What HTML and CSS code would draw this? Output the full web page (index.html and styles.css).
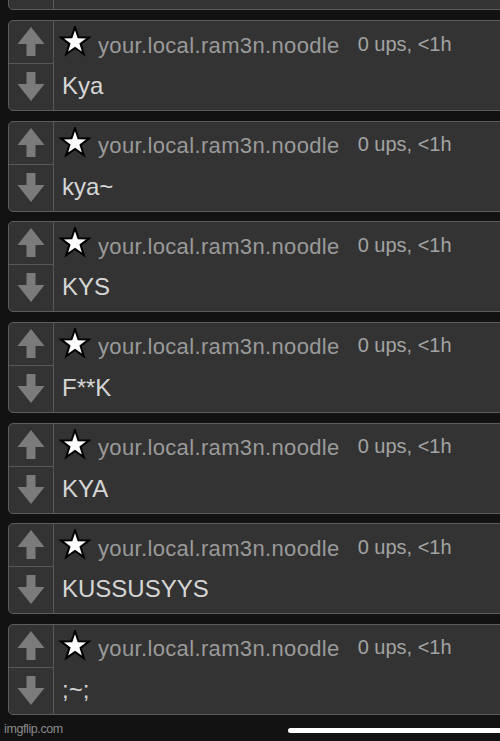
FILE: index.html
```html
<!DOCTYPE html>
<html lang="en">
<head>
  <meta charset="UTF-8">
  <meta name="viewport" content="width=device-width, initial-scale=1.0">
  <title>Comments</title>
  <link rel="stylesheet" href="styles.css">
</head>
<body>
  <!-- Comment list -->
  <div class="comment-list">
    <!-- previous comment, scrolled mostly out of view -->
    <div class="comment">
      <div class="vote">
        <div class="vote-up"><svg class="arrow" viewBox="0 0 28 30"><polygon points="14,0 27.5,17 18.5,17 18.5,29 9.5,29 9.5,17 0.5,17"/></svg></div>
        <div class="vote-down"><svg class="arrow" viewBox="0 0 28 30"><polygon points="14,29 27.5,12 18.5,12 18.5,0 9.5,0 9.5,12 0.5,12"/></svg></div>
      </div>
      <div class="comment-main"></div>
    </div>

    <div class="comment">
      <div class="vote">
        <div class="vote-up"><svg class="arrow" viewBox="0 0 28 30"><polygon points="14,0 27.5,17 18.5,17 18.5,29 9.5,29 9.5,17 0.5,17"/></svg></div>
        <div class="vote-down"><svg class="arrow" viewBox="0 0 28 30"><polygon points="14,29 27.5,12 18.5,12 18.5,0 9.5,0 9.5,12 0.5,12"/></svg></div>
      </div>
      <div class="comment-main">
        <div class="comment-head">
          <svg class="star" viewBox="0 0 30 30"><polygon points="15,1 18.233,10.55 28.315,10.674 20.231,16.7 23.229,26.326 15,20.5 6.771,26.326 9.769,16.7 1.685,10.674 11.767,10.55"/></svg>
          <span class="username">your.local.ram3n.noodle</span>
          <span class="meta">0 ups, &lt;1h</span>
        </div>
        <div class="comment-text">Kya</div>
      </div>
    </div>

    <div class="comment">
      <div class="vote">
        <div class="vote-up"><svg class="arrow" viewBox="0 0 28 30"><polygon points="14,0 27.5,17 18.5,17 18.5,29 9.5,29 9.5,17 0.5,17"/></svg></div>
        <div class="vote-down"><svg class="arrow" viewBox="0 0 28 30"><polygon points="14,29 27.5,12 18.5,12 18.5,0 9.5,0 9.5,12 0.5,12"/></svg></div>
      </div>
      <div class="comment-main">
        <div class="comment-head">
          <svg class="star" viewBox="0 0 30 30"><polygon points="15,1 18.233,10.55 28.315,10.674 20.231,16.7 23.229,26.326 15,20.5 6.771,26.326 9.769,16.7 1.685,10.674 11.767,10.55"/></svg>
          <span class="username">your.local.ram3n.noodle</span>
          <span class="meta">0 ups, &lt;1h</span>
        </div>
        <div class="comment-text">kya~</div>
      </div>
    </div>

    <div class="comment">
      <div class="vote">
        <div class="vote-up"><svg class="arrow" viewBox="0 0 28 30"><polygon points="14,0 27.5,17 18.5,17 18.5,29 9.5,29 9.5,17 0.5,17"/></svg></div>
        <div class="vote-down"><svg class="arrow" viewBox="0 0 28 30"><polygon points="14,29 27.5,12 18.5,12 18.5,0 9.5,0 9.5,12 0.5,12"/></svg></div>
      </div>
      <div class="comment-main">
        <div class="comment-head">
          <svg class="star" viewBox="0 0 30 30"><polygon points="15,1 18.233,10.55 28.315,10.674 20.231,16.7 23.229,26.326 15,20.5 6.771,26.326 9.769,16.7 1.685,10.674 11.767,10.55"/></svg>
          <span class="username">your.local.ram3n.noodle</span>
          <span class="meta">0 ups, &lt;1h</span>
        </div>
        <div class="comment-text">KYS</div>
      </div>
    </div>

    <div class="comment">
      <div class="vote">
        <div class="vote-up"><svg class="arrow" viewBox="0 0 28 30"><polygon points="14,0 27.5,17 18.5,17 18.5,29 9.5,29 9.5,17 0.5,17"/></svg></div>
        <div class="vote-down"><svg class="arrow" viewBox="0 0 28 30"><polygon points="14,29 27.5,12 18.5,12 18.5,0 9.5,0 9.5,12 0.5,12"/></svg></div>
      </div>
      <div class="comment-main">
        <div class="comment-head">
          <svg class="star" viewBox="0 0 30 30"><polygon points="15,1 18.233,10.55 28.315,10.674 20.231,16.7 23.229,26.326 15,20.5 6.771,26.326 9.769,16.7 1.685,10.674 11.767,10.55"/></svg>
          <span class="username">your.local.ram3n.noodle</span>
          <span class="meta">0 ups, &lt;1h</span>
        </div>
        <div class="comment-text">F**K</div>
      </div>
    </div>

    <div class="comment">
      <div class="vote">
        <div class="vote-up"><svg class="arrow" viewBox="0 0 28 30"><polygon points="14,0 27.5,17 18.5,17 18.5,29 9.5,29 9.5,17 0.5,17"/></svg></div>
        <div class="vote-down"><svg class="arrow" viewBox="0 0 28 30"><polygon points="14,29 27.5,12 18.5,12 18.5,0 9.5,0 9.5,12 0.5,12"/></svg></div>
      </div>
      <div class="comment-main">
        <div class="comment-head">
          <svg class="star" viewBox="0 0 30 30"><polygon points="15,1 18.233,10.55 28.315,10.674 20.231,16.7 23.229,26.326 15,20.5 6.771,26.326 9.769,16.7 1.685,10.674 11.767,10.55"/></svg>
          <span class="username">your.local.ram3n.noodle</span>
          <span class="meta">0 ups, &lt;1h</span>
        </div>
        <div class="comment-text">KYA</div>
      </div>
    </div>

    <div class="comment">
      <div class="vote">
        <div class="vote-up"><svg class="arrow" viewBox="0 0 28 30"><polygon points="14,0 27.5,17 18.5,17 18.5,29 9.5,29 9.5,17 0.5,17"/></svg></div>
        <div class="vote-down"><svg class="arrow" viewBox="0 0 28 30"><polygon points="14,29 27.5,12 18.5,12 18.5,0 9.5,0 9.5,12 0.5,12"/></svg></div>
      </div>
      <div class="comment-main">
        <div class="comment-head">
          <svg class="star" viewBox="0 0 30 30"><polygon points="15,1 18.233,10.55 28.315,10.674 20.231,16.7 23.229,26.326 15,20.5 6.771,26.326 9.769,16.7 1.685,10.674 11.767,10.55"/></svg>
          <span class="username">your.local.ram3n.noodle</span>
          <span class="meta">0 ups, &lt;1h</span>
        </div>
        <div class="comment-text">KUSSUSYYS</div>
      </div>
    </div>

    <div class="comment">
      <div class="vote">
        <div class="vote-up"><svg class="arrow" viewBox="0 0 28 30"><polygon points="14,0 27.5,17 18.5,17 18.5,29 9.5,29 9.5,17 0.5,17"/></svg></div>
        <div class="vote-down"><svg class="arrow" viewBox="0 0 28 30"><polygon points="14,29 27.5,12 18.5,12 18.5,0 9.5,0 9.5,12 0.5,12"/></svg></div>
      </div>
      <div class="comment-main">
        <div class="comment-head">
          <svg class="star" viewBox="0 0 30 30"><polygon points="15,1 18.233,10.55 28.315,10.674 20.231,16.7 23.229,26.326 15,20.5 6.771,26.326 9.769,16.7 1.685,10.674 11.767,10.55"/></svg>
          <span class="username">your.local.ram3n.noodle</span>
          <span class="meta">0 ups, &lt;1h</span>
        </div>
        <div class="comment-text">;~;</div>
      </div>
    </div>
  </div>

  <!-- Footer -->
  <div class="footer">
    <span class="watermark">imgflip.com</span>
    <div class="home-bar"></div>
  </div>
</body>
</html>
```

FILE: styles.css
```css
/* General Styles */
body {
  font-family: "Liberation Sans", Arial, sans-serif;
  margin: 0;
  padding: 0;
  background-color: #121212;
  overflow: hidden;
  height: 741px;
}

/* Comment list */
.comment-list {
  display: flex;
  flex-direction: column;
  gap: 9.67px;
  margin-top: -80.67px;
}

.comment {
  display: flex;
  height: 91px;
  box-sizing: border-box;
  margin-left: 8px;
  margin-right: -20px;
  background-color: #333333;
  border: 1px solid #5c5c5c;
  border-radius: 5px;
}

/* Vote column */
.vote {
  width: 44px;
  display: flex;
  flex-direction: column;
  border-right: 1px solid #575757;
}

.vote-up {
  height: 42px;
  border-bottom: 1px solid #575757;
  display: flex;
  justify-content: center;
  align-items: center;
}

.vote-down {
  flex: 1;
  display: flex;
  justify-content: center;
  align-items: center;
}

.arrow {
  width: 28px;
  height: 30px;
  fill: #7b7b7b;
}

/* Comment body */
.comment-main {
  flex: 1;
  display: flex;
  flex-direction: column;
}

.comment-head {
  height: 44px;
  display: flex;
  align-items: flex-start;
}

.star {
  width: 32px;
  height: 32px;
  margin-left: 5px;
  margin-top: 5px;
  fill: #ffffff;
  stroke: #000000;
  stroke-width: 1.9;
  stroke-linejoin: miter;
}

.username {
  margin-left: 7px;
  margin-top: 12.5px;
  font-size: 22px;
  line-height: 24px;
  letter-spacing: 0.35px;
  color: #9a9a9a;
}

.meta {
  margin-left: 18px;
  margin-top: 10.5px;
  font-size: 20px;
  line-height: 24px;
  color: #a3a3a3;
}

.comment-text {
  margin-top: 7px;
  padding-left: 8px;
  font-size: 24px;
  line-height: 28px;
  color: #d6d6d6;
}

/* Footer */
.footer {
  display: flex;
  justify-content: space-between;
  align-items: flex-start;
}

.watermark {
  margin-top: 7px;
  margin-left: 4px;
  font-size: 12.5px;
  line-height: 15px;
  letter-spacing: -0.4px;
  color: #8a8a8a;
}

.home-bar {
  width: 222px;
  height: 5px;
  margin-top: 13px;
  margin-right: -10px;
  background-color: #ffffff;
  border-radius: 3px;
}
```
